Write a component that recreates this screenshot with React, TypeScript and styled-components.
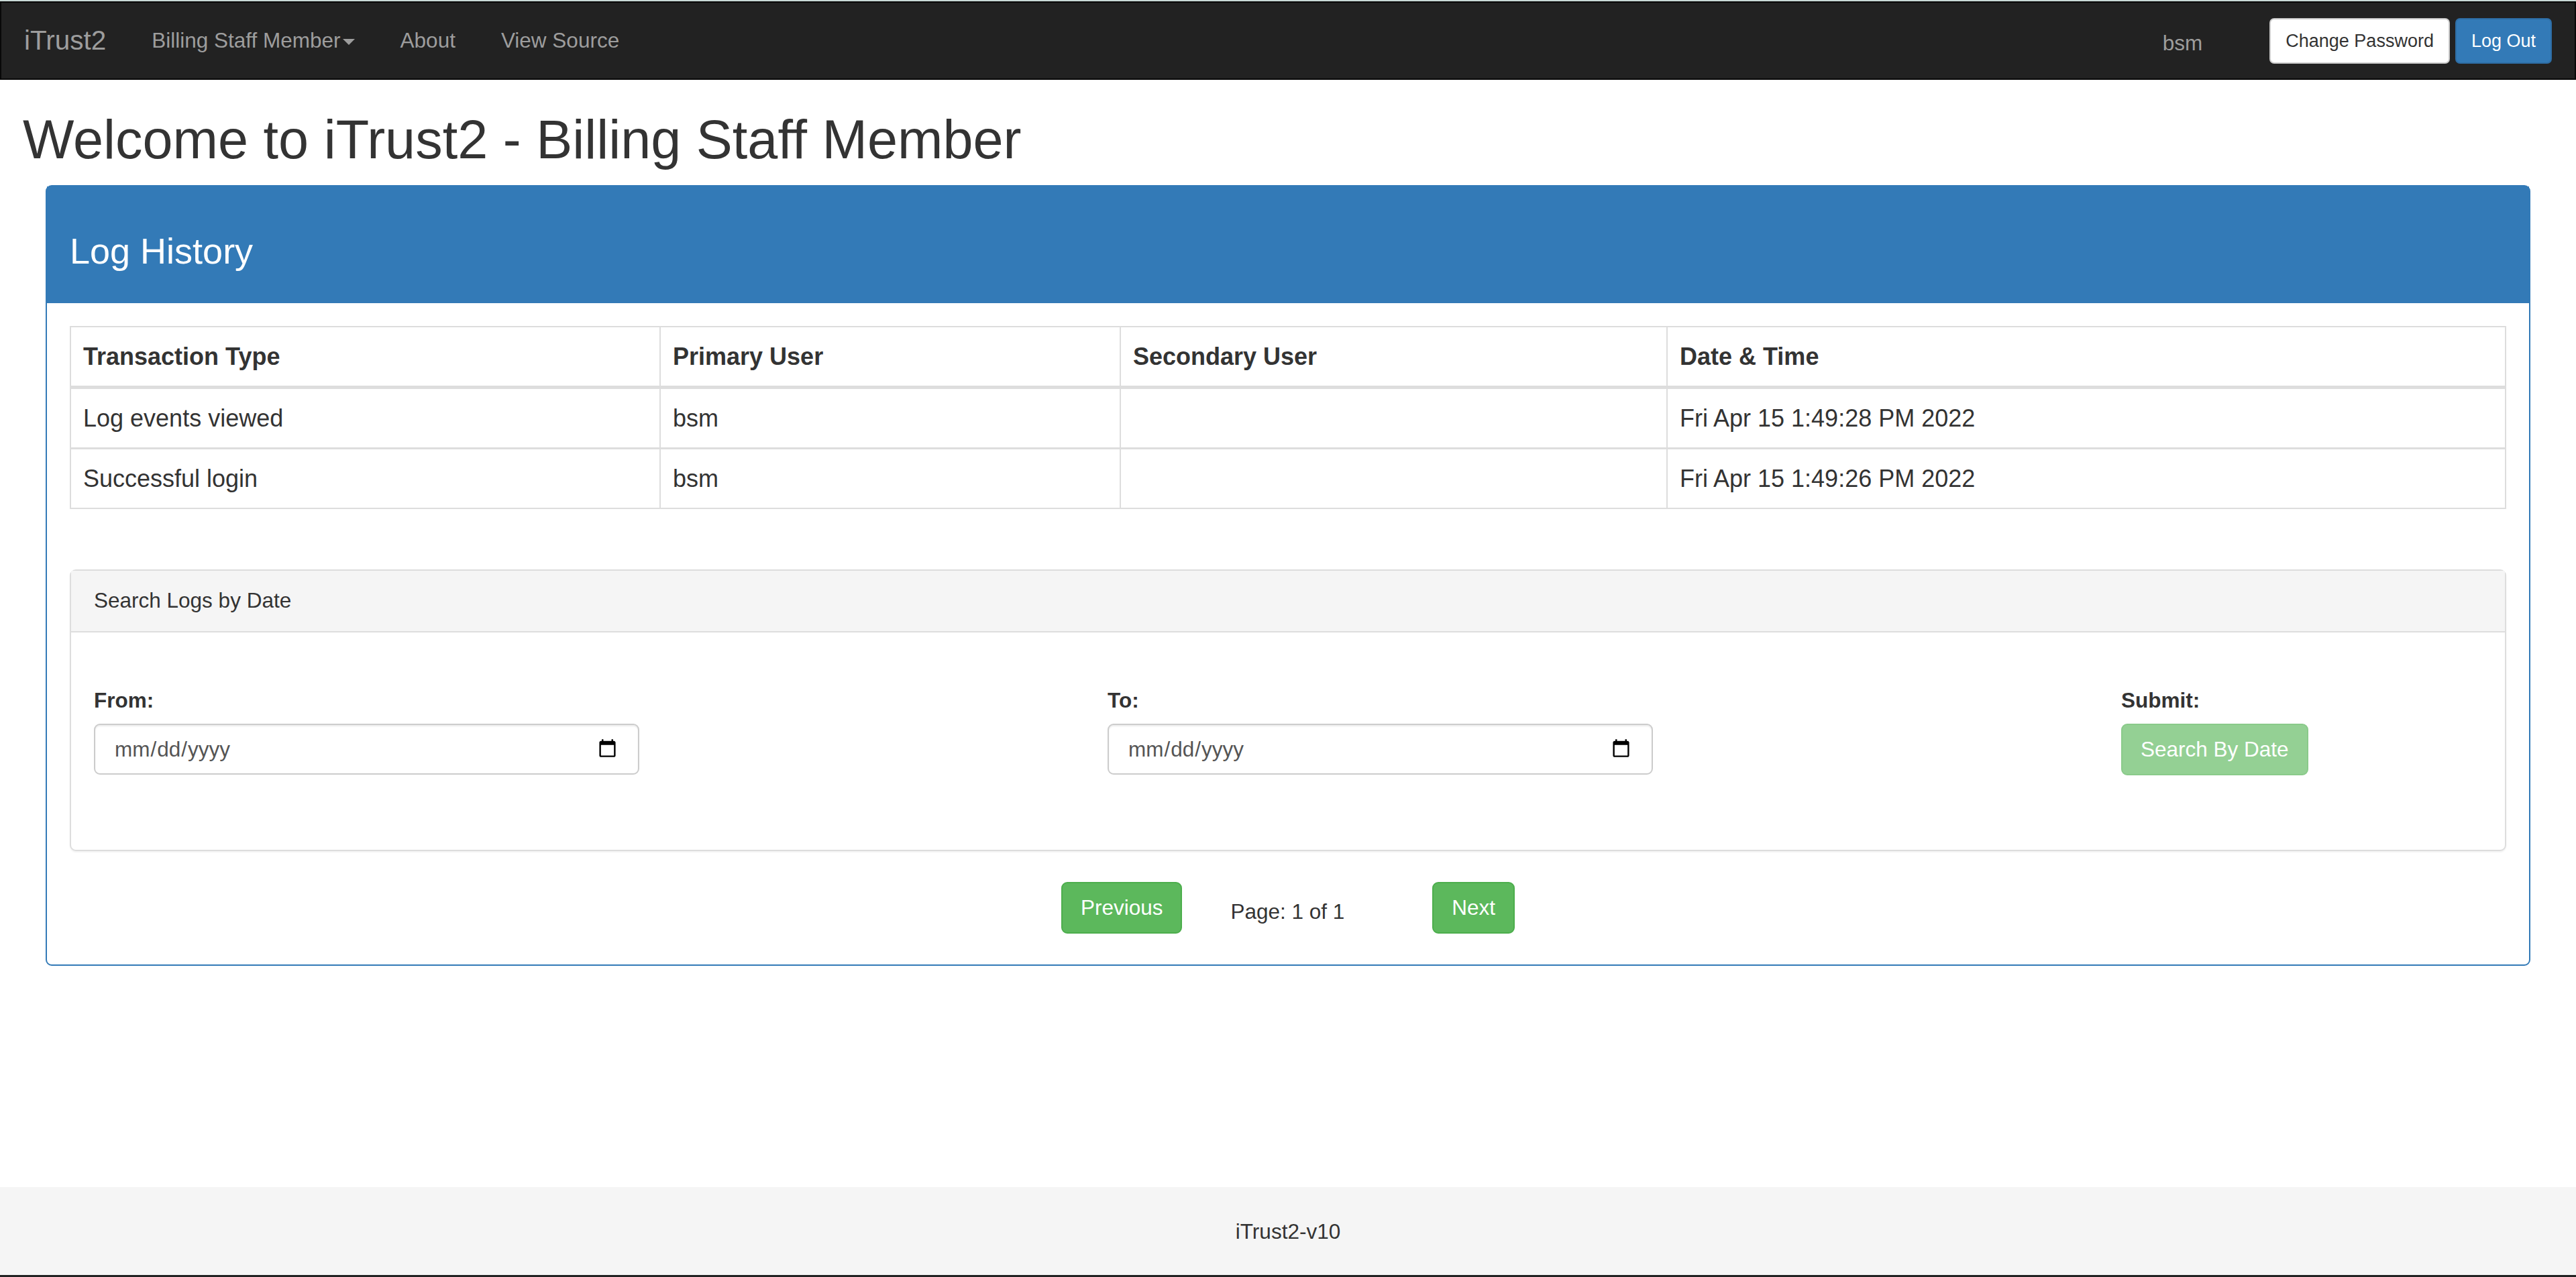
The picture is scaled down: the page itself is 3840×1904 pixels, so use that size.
import React from "react";
import styled, { createGlobalStyle } from "styled-components";

const GlobalStyle = createGlobalStyle`
  html, body {
    margin: 0;
    padding: 0;
    background: #fff;
  }
  body {
    font-family: "Liberation Sans", Arial, sans-serif;
    font-size: 31.5px;
    line-height: 45px;
    color: #333;
  }
  * {
    box-sizing: border-box;
  }
`;

const Page = styled.div`
  display: flex;
  flex-direction: column;
  min-height: 1904px;
`;

const TopStrip = styled.div`
  height: 2px;
  background: #c9d9d6;
`;

const Navbar = styled.nav`
  display: flex;
  align-items: flex-start;
  height: 117px;
  padding-right: 34px;
  background: #222;
  border: 2px solid #080808;
`;

const Brand = styled.a`
  padding: 34px;
  font-size: 40.5px;
  line-height: 45px;
  color: #9d9d9d;
`;

const NavLinks = styled.div`
  display: flex;
`;

const NavLink = styled.a`
  display: flex;
  align-items: baseline;
  padding: 34px;
  color: #9d9d9d;
`;

const Caret = styled.span`
  align-self: center;
  margin-left: 3px;
  margin-top: 4px;
  border-top: 9px solid #9d9d9d;
  border-left: 9px solid transparent;
  border-right: 9px solid transparent;
`;

const NavRight = styled.div`
  display: flex;
  align-items: flex-start;
  margin-left: auto;
`;

const UserName = styled.span`
  margin-right: 92px;
  padding-top: 38px;
  color: #9d9d9d;
`;

const SmallButton = styled.button<{ $primary?: boolean }>`
  height: 67.5px;
  margin-top: 23px;
  margin-left: 8px;
  padding: 0 22px;
  font-family: inherit;
  font-size: 27px;
  line-height: 40px;
  color: ${(p) => (p.$primary ? "#fff" : "#333")};
  background: ${(p) => (p.$primary ? "#337ab7" : "#fff")};
  border: 2px solid ${(p) => (p.$primary ? "#2e6da4" : "#ccc")};
  border-radius: 7px;
`;

const Title = styled.h1`
  margin: 45px 34px 23px;
  font-size: 81px;
  font-weight: 500;
  line-height: 89px;
  color: #333;
`;

const Panel = styled.section`
  margin: 0 68px;
  border: 2px solid #337ab7;
  border-radius: 9px;
`;

const PanelHeading = styled.div`
  padding: 66px 34px 48px;
  background: #337ab7;
`;

const PanelTitle = styled.h3`
  margin: 0;
  font-size: 54px;
  font-weight: 500;
  line-height: 60px;
  color: #fff;
`;

const PanelBody = styled.div`
  padding: 34px 34px 46px;
`;

const LogTable = styled.table`
  width: 100%;
  margin-bottom: 90px;
  font-size: 36px;
  table-layout: fixed;
  border-collapse: separate;
  border-spacing: 0;
  border-top: 2px solid #ddd;
  border-left: 2px solid #ddd;
`;

const Column = styled.col<{ $width?: number }>`
  width: ${(p) => (p.$width ? `${p.$width}px` : "auto")};
`;

const HeadCell = styled.th`
  padding: 21px 18px 21px;
  font-weight: 700;
  text-align: left;
  border-right: 2px solid #ddd;
  border-bottom: 5px solid #ddd;
`;

const Cell = styled.td<{ $last?: boolean }>`
  height: ${(p) => (p.$last ? 89 : 90)}px;
  padding: 21px 18px 20px;
  vertical-align: top;
  border-right: 2px solid #ddd;
  border-bottom: ${(p) => (p.$last ? 2 : 3)}px solid #ddd;
`;

const SearchPanel = styled.div`
  border: 2px solid #ddd;
  border-radius: 9px;
  box-shadow: 0 2px 2px rgba(0, 0, 0, 0.05);
`;

const SearchHeading = styled.div`
  padding: 22px 34px 23px;
  background: #f5f5f5;
  border-bottom: 2px solid #ddd;
`;

const SearchForm = styled.form`
  display: grid;
  grid-template-columns: 1511px 1511px 1fr;
  padding: 79px 34px 111px;
`;

const Field = styled.div`
  display: flex;
  flex-direction: column;
  align-items: flex-start;
`;

const FieldLabel = styled.label`
  margin-bottom: 12px;
  font-weight: 700;
`;

const DateInput = styled.input`
  width: 813px;
  height: 76px;
  padding: 0 28px;
  font-family: inherit;
  font-size: 31.5px;
  color: #555;
  background: #fff;
  border: 2px solid #ccc;
  border-radius: 9px;
  box-shadow: inset 0 2px 2px rgba(0, 0, 0, 0.075);
`;

const GreenButton = styled.button<{ $faded?: boolean }>`
  height: 77px;
  padding: 0 27px;
  font-family: inherit;
  font-size: 31.5px;
  color: #fff;
  background: #5cb85c;
  border: 2px solid #4cae4c;
  border-radius: 9px;
  opacity: ${(p) => (p.$faded ? 0.65 : 1)};
`;

const Pager = styled.div`
  display: flex;
  align-items: flex-start;
  justify-content: center;
  margin-top: 46px;
`;

const PageLabel = styled.span`
  margin: 22px 131px 0 72px;
`;

const Footer = styled.footer`
  display: flex;
  align-items: center;
  justify-content: center;
  height: 134px;
  margin-top: auto;
  padding-top: 2px;
  background: #f5f5f5;
  border-bottom: 3px solid #222;
`;

const logRows = [
  { type: "Log events viewed", primary: "bsm", secondary: "", date: "Fri Apr 15 1:49:28 PM 2022" },
  { type: "Successful login", primary: "bsm", secondary: "", date: "Fri Apr 15 1:49:26 PM 2022" },
];

const App: React.FC = () => {
  return (
    <Page>
      <GlobalStyle />
      <TopStrip />
      <Navbar>
        <Brand>iTrust2</Brand>
        <NavLinks>
          <NavLink>
            Billing Staff Member
            <Caret />
          </NavLink>
          <NavLink>About</NavLink>
          <NavLink>View Source</NavLink>
        </NavLinks>
        <NavRight>
          <UserName>bsm</UserName>
          <SmallButton>Change Password</SmallButton>
          <SmallButton $primary>Log Out</SmallButton>
        </NavRight>
      </Navbar>

      <Title>Welcome to iTrust2 - Billing Staff Member</Title>

      <Panel>
        <PanelHeading>
          <PanelTitle>Log History</PanelTitle>
        </PanelHeading>
        <PanelBody>
          <LogTable>
            <colgroup>
              <Column $width={879} />
              <Column $width={686} />
              <Column $width={815} />
              <Column />
            </colgroup>
            <thead>
              <tr>
                <HeadCell>Transaction Type</HeadCell>
                <HeadCell>Primary User</HeadCell>
                <HeadCell>Secondary User</HeadCell>
                <HeadCell>Date &amp; Time</HeadCell>
              </tr>
            </thead>
            <tbody>
              {logRows.map((row, i) => {
                const last = i === logRows.length - 1;
                return (
                  <tr key={row.date}>
                    <Cell $last={last}>{row.type}</Cell>
                    <Cell $last={last}>{row.primary}</Cell>
                    <Cell $last={last}>{row.secondary}</Cell>
                    <Cell $last={last}>{row.date}</Cell>
                  </tr>
                );
              })}
            </tbody>
          </LogTable>

          <SearchPanel>
            <SearchHeading>Search Logs by Date</SearchHeading>
            <SearchForm>
              <Field>
                <FieldLabel>From:</FieldLabel>
                <DateInput type="date" />
              </Field>
              <Field>
                <FieldLabel>To:</FieldLabel>
                <DateInput type="date" />
              </Field>
              <Field>
                <FieldLabel>Submit:</FieldLabel>
                <GreenButton type="button" $faded>
                  Search By Date
                </GreenButton>
              </Field>
            </SearchForm>
          </SearchPanel>

          <Pager>
            <GreenButton type="button">Previous</GreenButton>
            <PageLabel>Page: 1 of 1</PageLabel>
            <GreenButton type="button">Next</GreenButton>
          </Pager>
        </PanelBody>
      </Panel>

      <Footer>iTrust2-v10</Footer>
    </Page>
  );
};

export default App;
